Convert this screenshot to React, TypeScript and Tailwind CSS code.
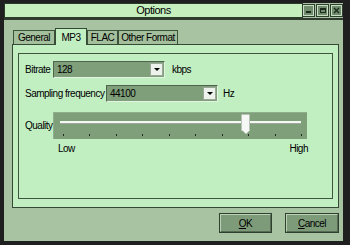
import { ReactNode } from 'react'

// light panel green, darker control green, window body
const sunken = 'border-t border-l border-[#4f634d] border-b border-r border-b-[#e4f4e2] border-r-[#e4f4e2]'

function Combo({ value, width }: { value: string; width: string }) {
  return (
    <div className={`${width} h-[17px] flex items-center bg-[#7f9f7b] ${sunken}`}>
      <span className="flex-1 pl-[3px] text-black">{value}</span>
      <div className="w-[13px] h-[13px] mr-[1px] bg-[#eef2ec] border border-[#9aa898] flex items-center justify-center">
        <div className="w-0 h-0 border-l-[3px] border-r-[3px] border-t-[3px] border-l-transparent border-r-transparent border-t-black" />
      </div>
    </div>
  )
}

function Tab({ label, width, active = false }: { label: string; width: string; active?: boolean }) {
  return (
    <div
      className={
        active
          ? `${width} h-[17px] -mb-[1px] z-10 flex items-center justify-center bg-[#c2efc2] border border-b-0 border-[#344a34]`
          : `${width} h-[14px] flex items-center justify-center bg-[#a3bf9c] border border-b-0 border-[#3d523b]`
      }
    >
      {label}
    </div>
  )
}

function WinButton({ children }: { children: ReactNode }) {
  return (
    <div className="w-[11px] h-[11px] flex items-center justify-center bg-[#6f8c6c] border border-[#c9dcc6] outline outline-1 outline-[#2f3f2e]">
      {children}
    </div>
  )
}

function DlgButton({ children, width }: { children: ReactNode; width: string }) {
  return (
    <div className={`${width} h-[20px] border border-[#2f412e]`}>
      <div className="h-full flex items-center justify-center bg-[#7d9b79] border-t border-l border-[#b9d2b4] border-b border-r border-b-[#566b53] border-r-[#566b53]">
        {children}
      </div>
    </div>
  )
}

export default function App() {
  const ticks = [0, 1, 2, 3, 4, 5, 6, 7, 8, 9]

  return (
    <div className="w-[350px] h-[245px] bg-[#3a3a3a] border-l-[4px] border-t-[3px] border-r-[7px] border-b-[4px] border-[#1f1f1f] font-['Liberation_Sans',Arial,sans-serif] text-[10px] tracking-[-0.5px] text-black">
      <div className="h-full flex flex-col">
        {/* title bar */}
        <div className="h-[15px] flex items-center bg-[#a8c3a1]">
          <div className="w-[301px] h-full flex items-center justify-center bg-[#c6efbe] border border-[#2b3a2a] text-[11px]">
            Options
          </div>
          <div className="flex-1 flex items-center justify-end gap-[3px] pr-[1px]">
            <WinButton>
              <div className="w-[5px] h-[2px] bg-[#1c2a1c] mt-[3px]" />
            </WinButton>
            <WinButton>
              <div className="w-[6px] h-[5px] border border-t-2 border-[#1c2a1c]" />
            </WinButton>
            <WinButton>
              <svg width="7" height="7" viewBox="0 0 7 7">
                <path d="M1 1L6 6M6 1L1 6" stroke="#1c2a1c" strokeWidth="1.3" />
              </svg>
            </WinButton>
          </div>
        </div>
        <div className="h-[2px] bg-[#2e3b2d]" />

        {/* body */}
        <div className="flex-1 flex flex-col bg-[#a8c3a1] pl-[8px] pr-[4px] pt-[7px] pb-[8px]">
          <div className="flex items-end pl-[1px] h-[17px]">
            <Tab label="General" width="w-[42px]" />
            <Tab label="MP3" width="w-[32px]" active />
            <Tab label="FLAC" width="w-[31px]" />
            <Tab label="Other Format" width="w-[60px]" />
          </div>

          <div className="h-[164px] bg-[#c2efc2] border border-[#344a34] pl-[5px] pr-[5px] pt-[8px] pb-[8px]">
            <div className="h-full border border-[#3f553e] pl-[6px] pt-[7px]">
              <div className="flex items-center">
                <span className="w-[28px]">Bitrate</span>
                <Combo value="128" width="w-[112px]" />
                <span className="ml-[7px]">kbps</span>
              </div>

              <div className="flex items-center mt-[7px]">
                <span className="w-[81px]">Sampling frequency</span>
                <Combo value="44100" width="w-[112px]" />
                <span className="ml-[5px]">Hz</span>
              </div>

              <div className="flex items-center mt-[10px]">
                <span className="w-[28px]">Quality</span>
                <div className="relative w-[254px] h-[27px] bg-[#7f9f7b] border-t border-l border-[#8fae8b]">
                  <div className="absolute left-[6px] right-[6px] top-[8px] h-[3px] bg-[#f4f8f2] border-b border-[#9ca89a]" />
                  <div className="absolute left-[187px] top-[1px] w-[9px] h-[17px] bg-[#f6f8f5] border border-[#b8c2b6] rounded-t-[1px]" />
                  <div className="absolute left-[188px] top-[17px] w-0 h-0 border-l-[4px] border-r-[4px] border-t-[4px] border-l-transparent border-r-transparent border-t-[#f6f8f5]" />
                  <div className="absolute left-[9px] right-[5px] top-[21px] flex justify-between">
                    {ticks.map((t) => (
                      <div key={t} className="w-[1px] h-[2px] bg-[#1d2a1c]" />
                    ))}
                  </div>
                </div>
              </div>

              <div className="flex w-[283px] justify-between pl-[33px] mt-[2px]">
                <span>Low</span>
                <span>High</span>
              </div>
            </div>
          </div>

          <div className="flex-1 flex items-end justify-end gap-[13px]">
            <DlgButton width="w-[53px]">
              <span className="underline">O</span>K
            </DlgButton>
            <DlgButton width="w-[54px]">
              <span className="underline">C</span>ancel
            </DlgButton>
          </div>
        </div>
      </div>
    </div>
  )
}
